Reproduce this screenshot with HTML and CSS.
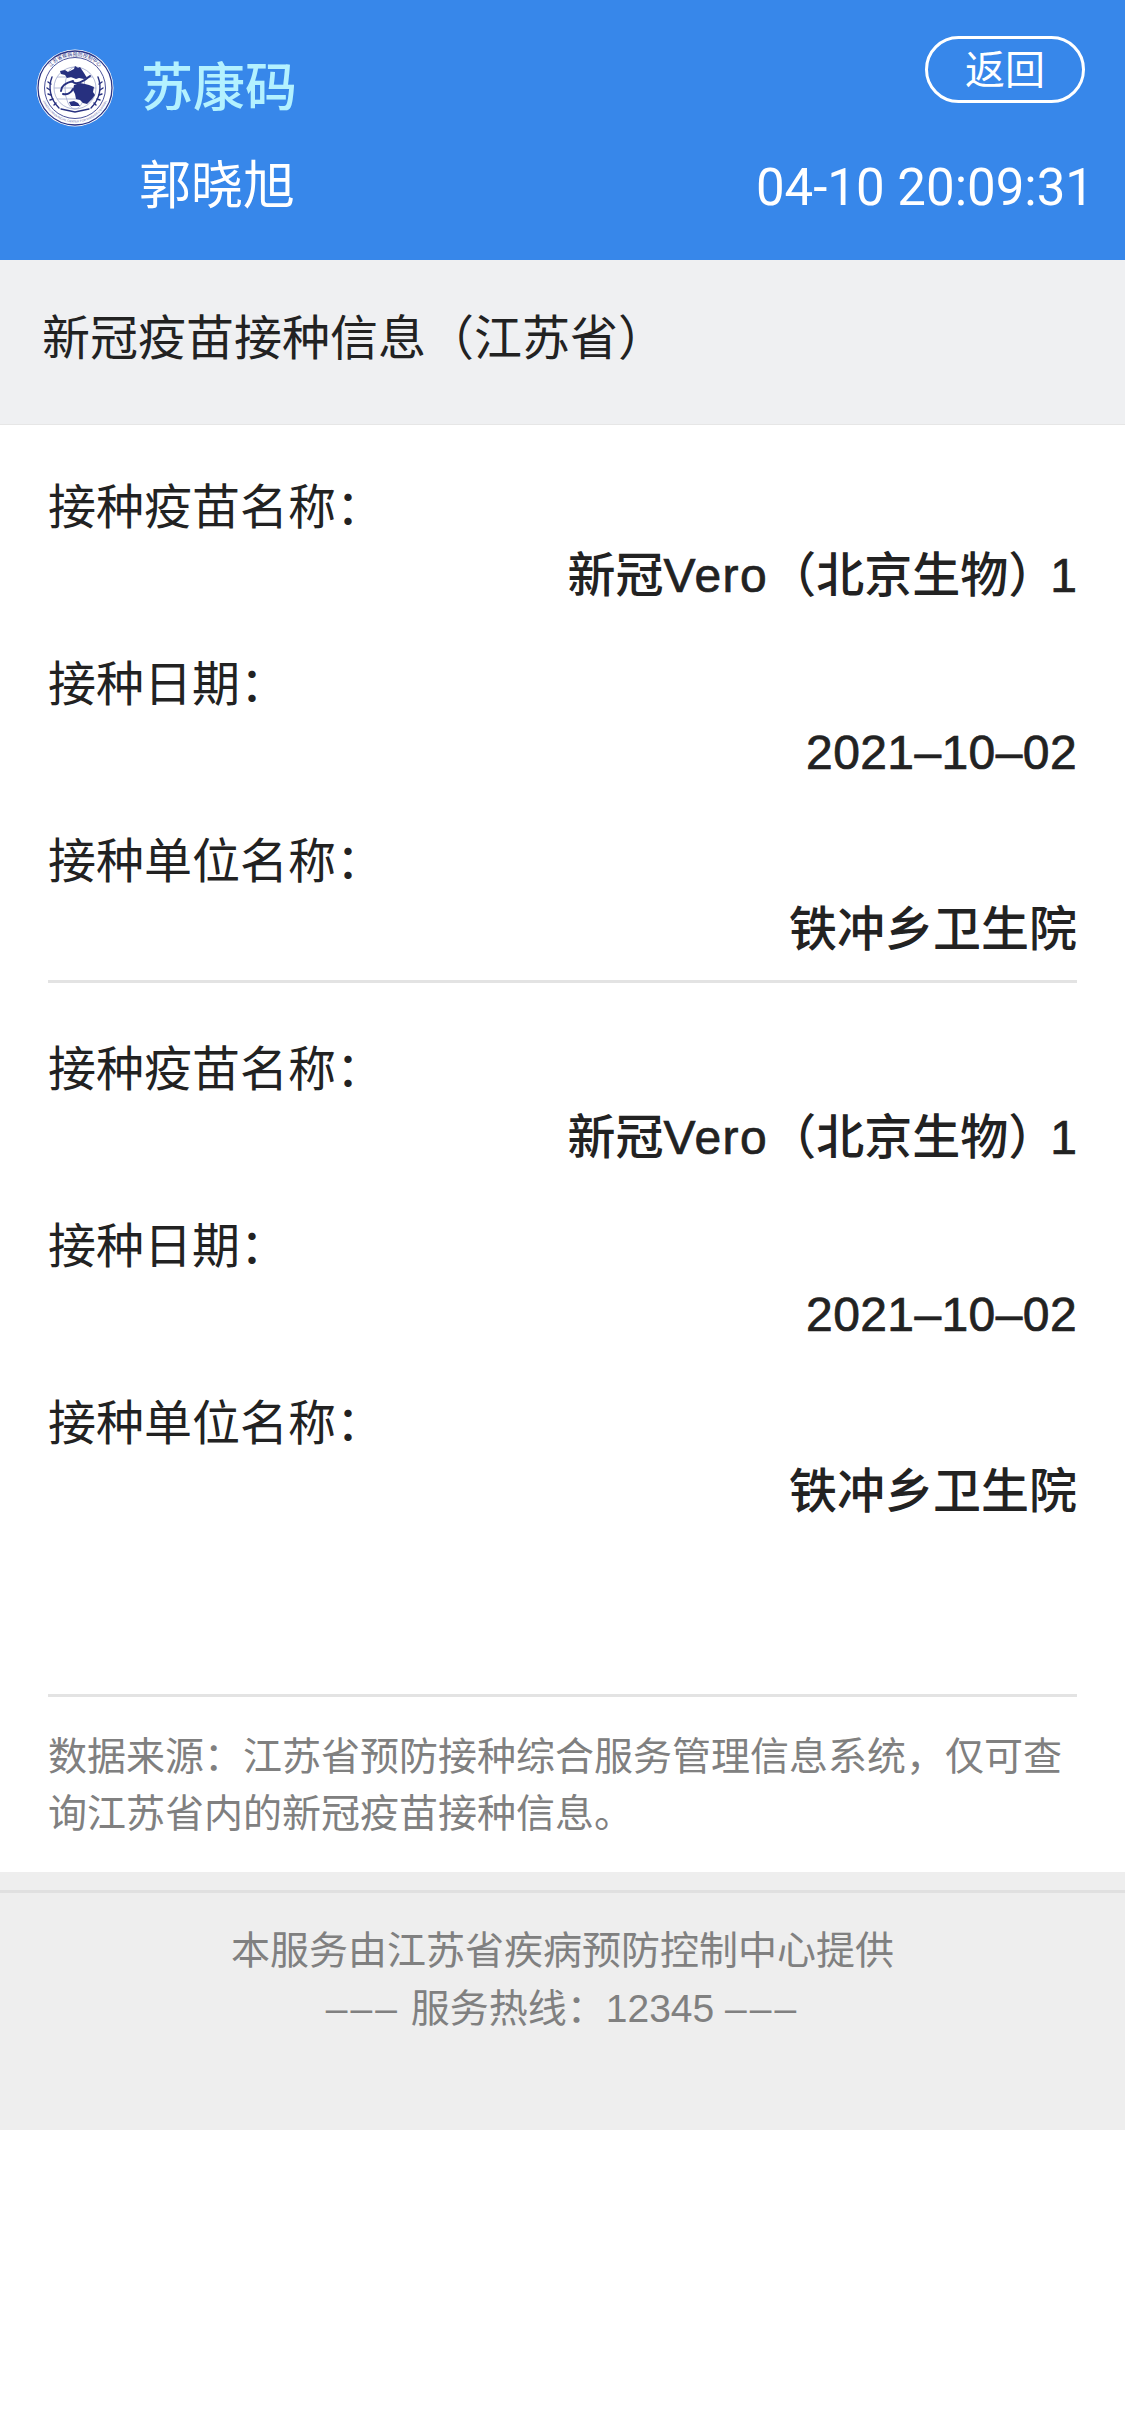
FILE: index.html
```html
<!DOCTYPE html>
<html lang="zh-CN">
<head>
<meta charset="utf-8">
<title>苏康码</title>
<link rel="stylesheet" href="styles.css">
</head>
<body>
<header class="top">
  <svg class="logo" viewBox="0 0 78 78" aria-hidden="true">
    <defs>
      <path id="arc" d="M7 39a32 32 0 0 1 64 0"/>
      <path id="arc2" d="M4.5 39a34.5 34.5 0 0 0 69 0"/>
    </defs>
    <circle cx="39" cy="39" r="38.5" fill="#fff"/>
    <circle cx="39" cy="39" r="37" fill="none" stroke="#2b3486" stroke-width="1.3"/>
    <circle cx="39" cy="39" r="30.5" fill="#fff" stroke="#4a5199" stroke-width="1"/>
    <g fill="none" stroke="#aab2d2" stroke-width=".9">
      <circle cx="39" cy="39" r="21"/>
      <ellipse cx="39" cy="39" rx="10" ry="21"/>
      <path d="M18 39h42M21 28h36M21 50h36"/>
    </g>
    <text class="ring"><textPath href="#arc" startOffset="50%" text-anchor="middle">江苏省疾病预防控制中心</textPath></text>
    <text class="ring small"><textPath href="#arc2" startOffset="50%" text-anchor="middle">JIANGSU PROVINCIAL CENTER FOR DISEASE CONTROL</textPath></text>
    <path fill="#27307f" d="M24 22l5-1 3 2 6-3 1-3 3 2 2-1 2 3 2 3 3 5-3 1-5-1-3 1-5-2-4 1-2-3-4-1z"/>
    <path fill="#27307f" d="M38 36l6-2 5 1 4 1 5 2-1 5 2 3-3 4-2 2-3 3-4-1-3-3-4-1-1-5-2-4z"/>
    <path fill="none" stroke="#27307f" stroke-width="2" stroke-linecap="round" d="M25 42c0-5 4-8 12-10M27 45c4 1 8-1 10-5M37 33c3 3 10 0 17-6"/>
    <path fill="#27307f" d="M33 53l5-1 4 2 2 3h-9z"/>
    <g fill="none" stroke="#27307f" stroke-width="1.4" stroke-linecap="round">
      <path d="M16 28c-4 10-2 22 7 31M62 28c4 10 2 22-7 31"/>
      <path d="M12 33l3 2M11 39l3 2M12 45l3 1M14 51l3-1M18 56l2-2M66 33l-3 2M67 39l-3 2M66 45l-3 1M64 51l-3-1M60 56l-2-2"/>
      <path d="M25 60l14 3 14-3"/>
    </g>
  </svg>
  <div class="names">
    <div class="brand">苏康码</div>
    <div class="person">郭晓旭</div>
  </div>
  <div class="side">
    <button class="back" type="button">返回</button>
    <div class="clock">04-10 20:09:31</div>
  </div>
</header>

<h1 class="heading">新冠疫苗接种信息（江苏省）</h1>

<main class="sheet">
  <section class="record">
    <div class="label">接种疫苗名称：</div>
    <div class="value">新冠<span class="latin word">Vero</span>（北京生物<span class="trim">）</span><span class="latin">1</span></div>
    <div class="label">接种日期：</div>
    <div class="value"><span class="latin date">2021–10–02</span></div>
    <div class="label">接种单位名称：</div>
    <div class="value">铁冲乡卫生院</div>
  </section>
  <section class="record">
    <div class="label">接种疫苗名称：</div>
    <div class="value">新冠<span class="latin word">Vero</span>（北京生物<span class="trim">）</span><span class="latin">1</span></div>
    <div class="label">接种日期：</div>
    <div class="value"><span class="latin date">2021–10–02</span></div>
    <div class="label">接种单位名称：</div>
    <div class="value">铁冲乡卫生院</div>
  </section>
  <p class="note">数据来源：江苏省预防接种综合服务管理信息系统，仅可查询江苏省内的新冠疫苗接种信息。</p>
</main>

<footer class="foot">
  <div class="foot-inner">
    <div>本服务由江苏省疾病预防控制中心提供</div>
    <div><span class="dash">–––</span> 服务热线：12345 <span class="dash">–––</span></div>
  </div>
</footer>
</body>
</html>
```
FILE: styles.css
```css
* { box-sizing: border-box; }
html, body { margin: 0; padding: 0; background: #fff; }
body {
  width: 1125px;
  min-height: 2436px;
  font-family: "Liberation Sans", "Noto Sans CJK SC", sans-serif;
  color: #222;
}
.top {
  height: 260px;
  background: #3787ea;
  display: flex;
  padding: 36px 31px 0 36px;
  color: #fff;
}
.logo { width: 78px; height: 78px; margin-top: 13px; flex: none; }
.names { margin-left: 25px; flex: 1; padding-top: 18px; }
.brand { font-size: 52px; line-height: 68px; font-weight: 500; color: #b3f1ff; margin-left: 2px; }
.person { font-size: 52px; line-height: 68px; margin-top: 30px; }
.side { display: flex; flex-direction: column; align-items: flex-end; }
.back {
  width: 160px;
  height: 67px;
  margin-right: 9px;
  border: 3px solid #fff;
  border-radius: 34px;
  background: none;
  color: #fff;
  font: 40px/1 "Noto Sans CJK SC", sans-serif;
  padding: 0 0 5px;
}
.clock {
  font-family: Roboto, sans-serif;
  font-size: 51px;
  line-height: 60px;
  margin-top: 55px;
}
.heading {
  margin: 0;
  height: 165px;
  background: #eff0f2;
  border-bottom: 1px solid #e6e6e6;
  padding: 0 42px 6px;
  display: flex;
  align-items: center;
  font-size: 48px;
  font-weight: 400;
  line-height: 1;
}
.sheet { padding: 0 48px; height: 1447px; }
.record { padding-top: 50px; height: 558px; }
.record:first-child { border-bottom: 3px solid #e3e3e3; }
.record + .record { height: 714px; border-bottom: 3px solid #e3e3e3; padding-top: 54px; }
.label { font-size: 48px; line-height: 66px; }
.value {
  font-size: 48px;
  line-height: 66px;
  font-weight: 500;
  text-align: right;
  padding-top: 2px;
  margin-bottom: 43px;
}
.latin { -webkit-text-stroke: 0.7px #222; }
.word { letter-spacing: 1.5px; }
.trim { letter-spacing: -6px; }
.date { letter-spacing: 0.4px; }
.note {
  margin: 0;
  padding-top: 31px;
  font-size: 39px;
  line-height: 57px;
  color: #808080;
}
.foot {
  height: 258px;
  background: #eeeeee;
  padding-top: 18px;
}
.foot-inner {
  border-top: 3px solid #e0e0e0;
  padding-top: 29px;
  text-align: center;
  font-size: 39px;
  line-height: 58px;
  color: #808080;
}
.dash { letter-spacing: 3px; }
.ring { font: 5px "Noto Sans CJK SC", sans-serif; fill: #2b3486; }
.ring.small { font: 3px "Liberation Sans", sans-serif; fill: #5c63a6; }
```
